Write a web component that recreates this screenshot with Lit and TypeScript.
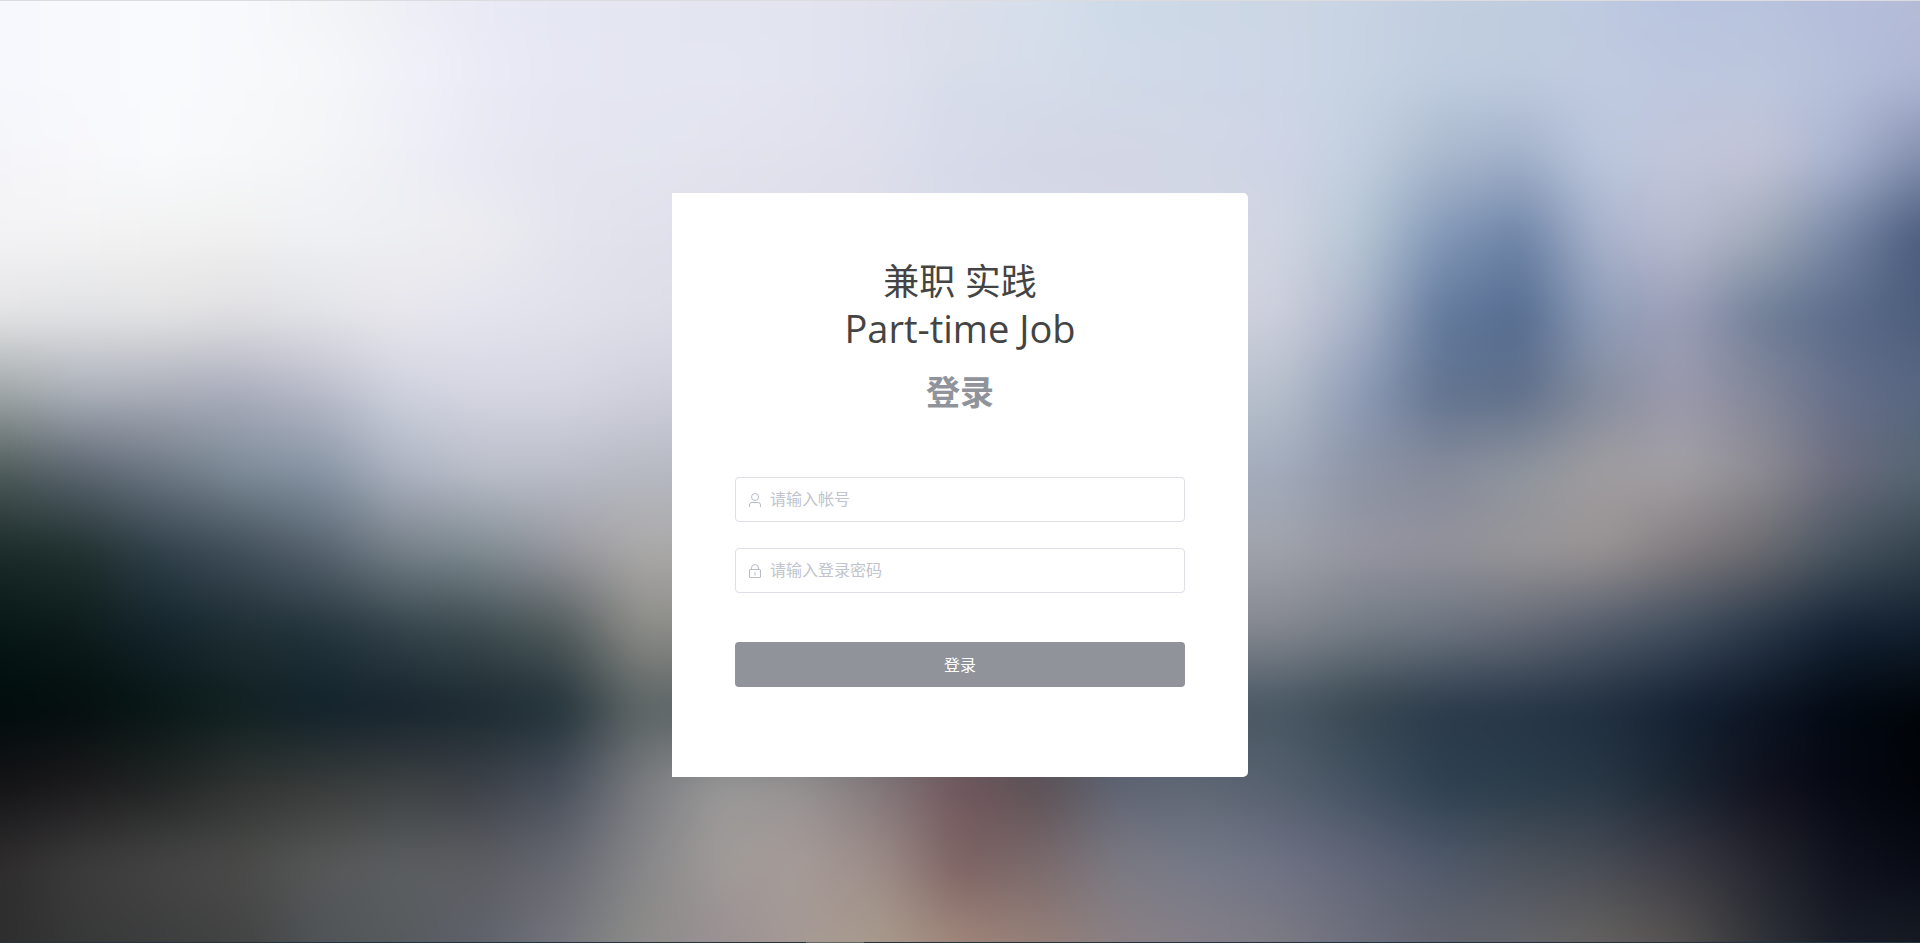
import { LitElement, html, css, svg } from "lit";
import { customElement, state } from "lit/decorators.js";

const BOX_WIDTH = 1920;
const BOX_HEIGHT = 943;
const BLEED = 80;

// Colour samples of the blurred city backdrop, evenly spaced; "-" is interpolated.
const ROWS = [
  "f6f8fd f7f9fd f8fafd f8f9fc f4f5f7 eff0f6 e8eaf5 e5e7f3 e4e6f2 e3e5f1 e2e5f0 dfe2ed dbdfea d6dfec cedae8 cdd8e6 ccd6e5 c8d3e3 c2cfe0 bfcddf becae0 b9c4e0 b8c3dd b5bedb b4bcd8",
  "f6f8fd f7f9fd f9fafd f8f9fb f5f7f9 f1f2f9 ebebf6 e6e7f3 e4e6f2 e4e6f2 e2e4f0 dfe1ee d8ddea d5dcea d1dae8 cfd8e7 cdd6e6 c6d3e2 bfcde0 becbde c0cae0 bdc7de bcc7dd b6c0da aeb6d3",
  "f5f5f9 f8f8fb f8fafc f7f8f9 f4f5f7 efeff6 e9e9f5 e5e5f0 e3e5ef e3e3ee e1e1ed dddfeb d6daea d4d7e6 d3d6e5 d2d7e6 cfd4e6 c2cfdf aab8cc a1afc9 bac7dc c2c6db c3c4d7 a9b4d0 828ead",
  "f3f3f5 f3f3f4 f1f1f1 f0f0f0 eff0f4 eeeff2 ececf0 e5e5ee e1e1ec - - - - - - - d1d5e2 b5c6d4 8398b8 6c83a6 a9b3cc b9bbd0 a1abb9 7887a5 4a5b7c",
  "e4e4e6 e1e2e4 e3e3e4 dfdfe2 e2e3e8 e8e6ec e4e4ef e1e1ec dedee9 - - - - - - - cdcfdc a9b3c8 627a9d 546c90 8f9db8 9b9fb7 707f98 5b6b8a 4c5e7c",
  "9fa6a6 abb0ba a9adb8 a9acbc b8bac8 ced2de d5d6e2 d5d6e1 cfd0dc - - - - - - - b6bfcb 8d9bb6 61738f 5f6f8a 858d9e 9c9aae 838799 65708b 586682",
  "4d5a58 5a6470 6c7783 7d8b98 8694a4 acb2c1 babec9 babec9 b6b9c2 - - - - - - - a2abbc 8c94a5 868b9b 8f959e a09da0 a3a0a4 8f8d94 6d6d7f 566672",
  "1a2b2a 20312f 30404a 404e59 56636f 768088 7f8b92 97979f aba9a8 - - - - - - - a0a3ab 9696a1 92929c 989698 9a9494 837d80 6c6b70 475560 35434f",
  "061816 0d1c1b 14242c 1e2e34 24343c 33434a 3d4c50 505a5b 8c8c87 - - - - - - - 84878f 747c85 6c7580 656a76 535c6b 414e5e 293849 142234 111f2e",
  "010c0d 040e0e 081716 102020 11222b 16232d 1b2930 22323a 5c6464 - - - - - - - 475763 364650 2b3a4a 263648 202f3f 132132 0c1423 020912 010509",
  "131315 1c1a1c 212524 303332 383b39 3d4142 3d4148 484f5b 797b80 9a9999 979393 83777a 70565c 5c5054 5f6474 5f6775 56606e 425161 2e4050 2b3c4a 283745 1b2532 11121e 060813 010408",
  "2f2d2e 3d3c3d 454445 4a4b49 575858 5c5f61 5c5d62 666871 868689 a09b98 a69b98 9c8c88 7d6262 7a6a6c 7b7a83 757a88 6f7285 616678 505a6c 4d535c 484c55 3c3b45 25262f 10131e 080b15",
  "2d2d2e 373838 3c3d3e 424342 4f5458 565b5e 5f626b 74757d 8c8c88 9a9092 a69a95 a99a8c a0867a 957f78 8a8084 847f88 7c7b84 6c6e7c 63656e 64656c 65625f 55524f 31343a 191d27 161b24",
].map((row) => row.split(" "));

@customElement("blurred-backdrop")
export class BlurredBackdrop extends LitElement {
  static styles = css`
    :host {
      display: block;
      overflow: hidden;
    }
    .scene {
      display: block;
      width: 100%;
      height: 100%;
    }
    .veil {
      color-interpolation: sRGB;
      mask-type: luminance;
    }
  `;

  private band(colors: string[], index: number) {
    const step = BOX_HEIGHT / (ROWS.length - 1);
    const top = index === 0 ? -BLEED : (index - 1) * step;
    const height = BOX_HEIGHT + BLEED - top;
    const width = BOX_WIDTH + 2 * BLEED;
    const stops = colors
      .map((color, i) => ({ color, offset: i / (colors.length - 1) }))
      .filter((stop) => stop.color !== "-");
    return svg`
      <linearGradient id="hue${index}" gradientUnits="userSpaceOnUse" x1="0" y1="0" x2=${BOX_WIDTH} y2="0">
        ${stops.map((s) => svg`<stop offset=${s.offset} stop-color=${"#" + s.color}></stop>`)}
      </linearGradient>
      <linearGradient id="fade${index}" gradientUnits="userSpaceOnUse" x1="0" y1=${(index - 1) * step} x2="0" y2=${index * step}>
        <stop offset="0" stop-color=${index === 0 ? "#fff" : "#000"}></stop>
        <stop offset="1" stop-color="#fff"></stop>
      </linearGradient>
      <mask id="mask${index}" class="veil" maskUnits="userSpaceOnUse" x=${-BLEED} y=${top} width=${width} height=${height}>
        <rect x=${-BLEED} y=${top} width=${width} height=${height} fill="url(#fade${index})"></rect>
      </mask>
      <rect x=${-BLEED} y=${top} width=${width} height=${height} fill="url(#hue${index})" mask="url(#mask${index})"></rect>`;
  }

  render() {
    return html`<svg class="scene" viewBox="0 0 1920 943" preserveAspectRatio="none" aria-hidden="true">
      <defs>
        <filter id="soft" filterUnits="userSpaceOnUse" x="-80" y="-80" width="2080" height="1103" color-interpolation-filters="sRGB">
          <feGaussianBlur stdDeviation="16"></feGaussianBlur>
        </filter>
      </defs>
      <g filter="url(#soft)">${ROWS.map((row, i) => this.band(row, i))}</g>
    </svg>`;
  }
}

@customElement("app-root")
export class AppRoot extends LitElement {
  static styles = css`
    :host {
      display: block;
      font-family: "Open Sans", "Noto Sans CJK SC", sans-serif;
      color: #303133;
    }
    .page {
      position: relative;
      box-sizing: border-box;
      min-height: 100vh;
      padding-top: 10vw;
      border-top: 1px solid #dcdce0;
      display: flex;
      flex-direction: column;
      justify-content: space-between;
      align-items: center;
      overflow: hidden;
    }
    .backdrop {
      position: absolute;
      inset: 0;
    }
    .card {
      position: relative;
      box-sizing: border-box;
      width: 30%;
      min-width: 360px;
      padding: 66px 63px 90px;
      background: #fff;
      border-radius: 0 5px 5px 0;
    }
    .title {
      margin: 0;
      color: #444;
      font-size: 36px;
      font-weight: 400;
      line-height: 46px;
      text-align: center;
    }
    .latin {
      display: block;
      font-size: 38px;
    }
    .subtitle {
      margin: 16px 0 60px;
      color: #909399;
      font-size: 34px;
      font-weight: 700;
      line-height: 50px;
      text-align: center;
    }
    .field {
      display: flex;
      align-items: center;
      gap: 8px;
      box-sizing: border-box;
      height: 45px;
      margin-bottom: 26px;
      padding: 0 12px;
      border: 1px solid #dcdfe6;
      border-radius: 4px;
      background: #fff;
    }
    .field:focus-within {
      border-color: #909399;
    }
    .icon {
      flex: none;
      width: 14px;
      height: 14px;
      fill: none;
      stroke: #b8bcc6;
    }
    .input {
      flex: 1;
      box-sizing: border-box;
      min-width: 0;
      height: 100%;
      padding: 0 0 2px;
      border: 0;
      outline: 0;
      background: transparent;
      color: #606266;
      font: inherit;
      font-size: 16px;
    }
    .input::placeholder {
      color: #c0c4cc;
      opacity: 1;
    }
    .submit {
      display: block;
      width: 100%;
      height: 45px;
      margin-top: 49px;
      padding: 0 0 2px;
      border: 0;
      border-radius: 4px;
      background: #909399;
      color: #fff;
      font: inherit;
      font-size: 16px;
      cursor: pointer;
    }
    .edge {
      position: relative;
      width: 100%;
      height: 1px;
      background: linear-gradient(90deg, #22343f 42%, #5f696c 42%, #5f696c 45%, #22343f 45%);
    }
  `;

  @state() private account = "";
  @state() private password = "";

  render() {
    return html`
      <div class="page">
        <blurred-backdrop class="backdrop"></blurred-backdrop>
        <main class="card">
          <h1 class="title">兼职 实践 <span class="latin">Part-time Job</span></h1>
          <h2 class="subtitle">登录</h2>
          <form @submit=${(e: Event) => e.preventDefault()}>
            <label class="field">
              <svg class="icon" viewBox="0 0 14 14" aria-hidden="true">
                <circle cx="7" cy="4" r="3.5"></circle>
                <path d="M1.5 14V12Q1.5 9.5 4 9.5H10Q12.5 9.5 12.5 12V14"></path>
              </svg>
              <input class="input" type="text" aria-label="帐号" placeholder="请输入帐号" .value=${this.account}
                @input=${(e: Event) => (this.account = (e.target as HTMLInputElement).value)} />
            </label>
            <label class="field">
              <svg class="icon" viewBox="0 0 14 14" aria-hidden="true">
                <rect x="1.5" y="5.5" width="11" height="8" rx="0.5"></rect>
                <path d="M3.5 5.5V4A3.5 3.5 0 0 1 10.5 4V5.5M7 8V11.5"></path>
              </svg>
              <input class="input" type="password" aria-label="登录密码" placeholder="请输入登录密码" .value=${this.password}
                @input=${(e: Event) => (this.password = (e.target as HTMLInputElement).value)} />
            </label>
            <button class="submit" type="submit">登录</button>
          </form>
        </main>
        <div class="edge"></div>
      </div>
    `;
  }
}
